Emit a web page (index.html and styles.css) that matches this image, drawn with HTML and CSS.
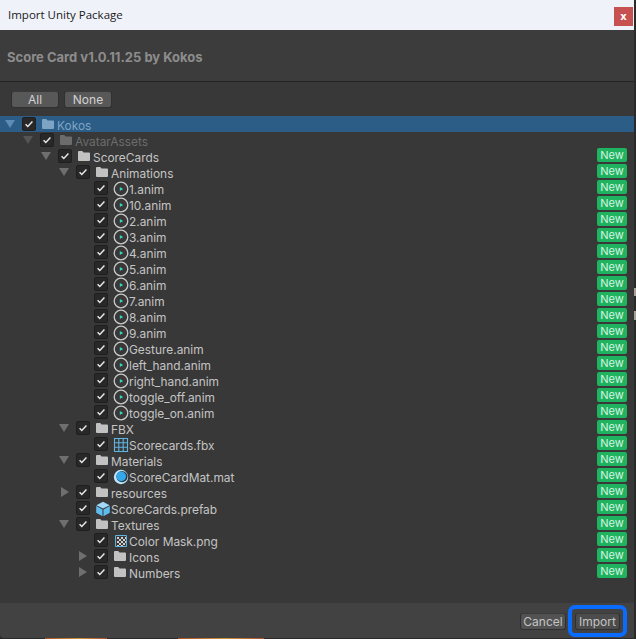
FILE: index.html
```html
<!DOCTYPE html>
<html lang="en">
<head>
<meta charset="utf-8">
<title>Import Unity Package</title>
<link rel="stylesheet" href="styles.css">
</head>
<body>
<svg class="defs" width="0" height="0" aria-hidden="true">
  <symbol id="folder" viewBox="0 0 14 12"><path d="M1 2q0-1 1-1h3.2l1.4 1.6H12q1 0 1 1V10q0 1-1 1H2q-1 0-1-1z" fill="currentColor"/></symbol>
  <symbol id="anim" viewBox="0 0 16 16"><circle cx="8" cy="8" r="6.8" fill="none" stroke="#c8c8c8" stroke-width="1.3"/><path d="M6.8 5.9L10.2 8l-3.4 2.1z" fill="#3fd0c0"/></symbol>
  <symbol id="fbx" viewBox="0 0 16 16"><path d="M1.5 1.5h13v13h-13zM5.8 1.5v13M10.2 1.5v13M1.5 5.8h13M1.5 10.2h13" fill="none" stroke="#5fb4e0" stroke-width="1.1"/></symbol>
  <symbol id="mat" viewBox="0 0 16 16"><circle cx="8" cy="8" r="7.2" fill="#bfe3f8"/><circle cx="9" cy="7.6" r="5.6" fill="#2b3a44"/><circle cx="8.2" cy="7.4" r="4.8" fill="#35a8ec"/></symbol>
  <symbol id="prefab" viewBox="0 0 16 16"><path d="M8 .8l6.6 3.4L8 7.6 1.4 4.2z" fill="#a3dafa"/><path d="M1.2 5L7.5 8.4V15.2L1.2 11.8z" fill="#5fbcef"/><path d="M14.8 5L8.5 8.4V15.2L14.8 11.8z" fill="#5fbcef"/></symbol>
  <symbol id="tex" viewBox="0 0 16 16"><path d="M2.5 2.5h11v11h-11z" fill="#3a3a3a" stroke="#5fb4e0"/><path d="M4 4h2v2H4zM8 4h2v2H8zM12 4h1v2h-1zM6 6h2v2H6zM10 6h2v2h-2zM4 8h2v2H4zM8 8h2v2H8zM12 8h1v2h-1zM6 10h2v2H6zM10 10h2v2h-2zM4 12h2v1H4zM8 12h2v1H8z" fill="#cfcfcf"/></symbol>
  <symbol id="tick" viewBox="0 0 14 14"><path d="M3 7.4l2.6 2.6L11 4.2" fill="none" stroke="#e8e8e8" stroke-width="1.7"/></symbol>
</svg>
<div class="backdrop">
<main class="window">
  <header class="titlebar">
    <span class="title-text">Import Unity Package</span>
    <button class="close" type="button">x</button>
  </header>
  <section class="package"><h1 class="package-name">Score Card v1.0.11.25 by Kokos</h1></section>
  <div class="toolbar">
    <button class="btn btn-wide" type="button">All</button>
    <button class="btn btn-wide" type="button">None</button>
  </div>
  <div class="tree">
    <div class="row selected"><span class="arrow down"></span><span class="check l0"><svg class="tick"><use href="#tick"/></svg></span><svg class="ico folder"><use href="#folder"/></svg><span class="name">Kokos</span></div>
    <div class="row dim lv1"><span class="arrow down"></span><span class="check"><svg class="tick"><use href="#tick"/></svg></span><svg class="ico folder"><use href="#folder"/></svg><span class="name">AvatarAssets</span></div>
    <div class="row lv2"><span class="arrow down"></span><span class="check"><svg class="tick"><use href="#tick"/></svg></span><svg class="ico folder"><use href="#folder"/></svg><span class="name">ScoreCards</span><span class="new">New</span></div>
    <div class="row lv3"><span class="arrow down"></span><span class="check"><svg class="tick"><use href="#tick"/></svg></span><svg class="ico folder"><use href="#folder"/></svg><span class="name">Animations</span><span class="new">New</span></div>
    <div class="row lv4"><span class="arrow"></span><span class="check"><svg class="tick"><use href="#tick"/></svg></span><svg class="ico file"><use href="#anim"/></svg><span class="name">1.anim</span><span class="new">New</span></div>
    <div class="row lv4"><span class="arrow"></span><span class="check"><svg class="tick"><use href="#tick"/></svg></span><svg class="ico file"><use href="#anim"/></svg><span class="name">10.anim</span><span class="new">New</span></div>
    <div class="row lv4"><span class="arrow"></span><span class="check"><svg class="tick"><use href="#tick"/></svg></span><svg class="ico file"><use href="#anim"/></svg><span class="name">2.anim</span><span class="new">New</span></div>
    <div class="row lv4"><span class="arrow"></span><span class="check"><svg class="tick"><use href="#tick"/></svg></span><svg class="ico file"><use href="#anim"/></svg><span class="name">3.anim</span><span class="new">New</span></div>
    <div class="row lv4"><span class="arrow"></span><span class="check"><svg class="tick"><use href="#tick"/></svg></span><svg class="ico file"><use href="#anim"/></svg><span class="name">4.anim</span><span class="new">New</span></div>
    <div class="row lv4"><span class="arrow"></span><span class="check"><svg class="tick"><use href="#tick"/></svg></span><svg class="ico file"><use href="#anim"/></svg><span class="name">5.anim</span><span class="new">New</span></div>
    <div class="row lv4"><span class="arrow"></span><span class="check"><svg class="tick"><use href="#tick"/></svg></span><svg class="ico file"><use href="#anim"/></svg><span class="name">6.anim</span><span class="new">New</span></div>
    <div class="row lv4"><span class="arrow"></span><span class="check"><svg class="tick"><use href="#tick"/></svg></span><svg class="ico file"><use href="#anim"/></svg><span class="name">7.anim</span><span class="new">New</span></div>
    <div class="row lv4"><span class="arrow"></span><span class="check"><svg class="tick"><use href="#tick"/></svg></span><svg class="ico file"><use href="#anim"/></svg><span class="name">8.anim</span><span class="new">New</span></div>
    <div class="row lv4"><span class="arrow"></span><span class="check"><svg class="tick"><use href="#tick"/></svg></span><svg class="ico file"><use href="#anim"/></svg><span class="name">9.anim</span><span class="new">New</span></div>
    <div class="row lv4"><span class="arrow"></span><span class="check"><svg class="tick"><use href="#tick"/></svg></span><svg class="ico file"><use href="#anim"/></svg><span class="name">Gesture.anim</span><span class="new">New</span></div>
    <div class="row lv4"><span class="arrow"></span><span class="check"><svg class="tick"><use href="#tick"/></svg></span><svg class="ico file"><use href="#anim"/></svg><span class="name">left_hand.anim</span><span class="new">New</span></div>
    <div class="row lv4"><span class="arrow"></span><span class="check"><svg class="tick"><use href="#tick"/></svg></span><svg class="ico file"><use href="#anim"/></svg><span class="name">right_hand.anim</span><span class="new">New</span></div>
    <div class="row lv4"><span class="arrow"></span><span class="check"><svg class="tick"><use href="#tick"/></svg></span><svg class="ico file"><use href="#anim"/></svg><span class="name">toggle_off.anim</span><span class="new">New</span></div>
    <div class="row lv4"><span class="arrow"></span><span class="check"><svg class="tick"><use href="#tick"/></svg></span><svg class="ico file"><use href="#anim"/></svg><span class="name">toggle_on.anim</span><span class="new">New</span></div>
    <div class="row lv3"><span class="arrow down"></span><span class="check"><svg class="tick"><use href="#tick"/></svg></span><svg class="ico folder"><use href="#folder"/></svg><span class="name">FBX</span><span class="new">New</span></div>
    <div class="row lv4"><span class="arrow"></span><span class="check"><svg class="tick"><use href="#tick"/></svg></span><svg class="ico file"><use href="#fbx"/></svg><span class="name">Scorecards.fbx</span><span class="new">New</span></div>
    <div class="row lv3"><span class="arrow down"></span><span class="check"><svg class="tick"><use href="#tick"/></svg></span><svg class="ico folder"><use href="#folder"/></svg><span class="name">Materials</span><span class="new">New</span></div>
    <div class="row lv4"><span class="arrow"></span><span class="check"><svg class="tick"><use href="#tick"/></svg></span><svg class="ico file"><use href="#mat"/></svg><span class="name">ScoreCardMat.mat</span><span class="new">New</span></div>
    <div class="row lv3"><span class="arrow right"></span><span class="check"><svg class="tick"><use href="#tick"/></svg></span><svg class="ico folder"><use href="#folder"/></svg><span class="name">resources</span><span class="new">New</span></div>
    <div class="row lv3"><span class="arrow"></span><span class="check"><svg class="tick"><use href="#tick"/></svg></span><svg class="ico file"><use href="#prefab"/></svg><span class="name">ScoreCards.prefab</span><span class="new">New</span></div>
    <div class="row lv3"><span class="arrow down"></span><span class="check"><svg class="tick"><use href="#tick"/></svg></span><svg class="ico folder"><use href="#folder"/></svg><span class="name">Textures</span><span class="new">New</span></div>
    <div class="row lv4"><span class="arrow"></span><span class="check"><svg class="tick"><use href="#tick"/></svg></span><svg class="ico file"><use href="#tex"/></svg><span class="name">Color Mask.png</span><span class="new">New</span></div>
    <div class="row lv4"><span class="arrow right"></span><span class="check"><svg class="tick"><use href="#tick"/></svg></span><svg class="ico folder"><use href="#folder"/></svg><span class="name">Icons</span><span class="new">New</span></div>
    <div class="row lv4"><span class="arrow right"></span><span class="check"><svg class="tick"><use href="#tick"/></svg></span><svg class="ico folder"><use href="#folder"/></svg><span class="name">Numbers</span><span class="new">New</span></div>
  </div>
  <footer class="footer">
    <button class="btn btn-cancel" type="button">Cancel</button>
    <button class="btn btn-import" type="button">Import</button>
  </footer>
</main>
<div class="peek">
  <span class="peek-a"></span>
  <span class="peek-b"></span>
</div>
<span class="edge edge-a"></span>
<span class="edge edge-b"></span>
</div>
</body>
</html>
```
FILE: styles.css
```css
* { box-sizing: border-box; }
html, body { margin: 0; padding: 0; }
body {
  width: 636px;
  height: 639px;
  overflow: hidden;
  background: #2a2a2a;
  font-family: Inter, "Liberation Sans", sans-serif;
  font-size: 12px;
  color: #c4c4c4;
}
.defs { position: absolute; }
.backdrop { display: flex; flex-direction: column; position: relative; }
.window {
  width: 634px;
  height: 638px;
  display: flex;
  flex-direction: column;
  background: #383838;
  border-bottom-left-radius: 4px;
  overflow: hidden;
}
.titlebar {
  height: 30px;
  flex: none;
  display: flex;
  align-items: center;
  justify-content: space-between;
  background: #f0f2f9;
  padding: 0 1px 0 8px;
  color: #1a1a1a;
  font-family: "Open Sans", "Liberation Sans", sans-serif;
  font-size: 11.5px;
}
.title-text { margin-top: -2px; }
.close {
  width: 19px;
  height: 19px;
  margin-top: 3px;
  padding: 0;
  border: 0;
  background: #c75050;
  color: #fff;
  font: bold 10px "DejaVu Sans", sans-serif;
}
.package {
  height: 52px;
  flex: none;
  display: flex;
  align-items: center;
  padding: 2px 7px 0;
  background: #3c3c3c;
  border-bottom: 1px solid #232323;
}
.package-name {
  margin: 0;
  font-size: 13px;
  font-weight: 700;
  color: #8d8d8d;
}
.toolbar {
  height: 34px;
  flex: none;
  display: flex;
  gap: 5px;
  padding: 9px 0 0 11px;
}
.btn {
  height: 17px;
  padding: 0;
  border: 1px solid #303030;
  border-top-color: #3a3a3a;
  border-radius: 3px;
  background: #585858;
  color: #d2d2d2;
  font-family: Inter, "Liberation Sans", sans-serif;
  font-size: 12px;
  line-height: 15px;
}
.btn-wide { width: 48px; }
.tree { flex: 1; min-height: 0; }
.row {
  height: 16px;
  display: flex;
  align-items: center;
  padding-left: 4px;
  line-height: 16px;
}
.lv1 { padding-left: 22px; }
.lv2 { padding-left: 40px; }
.lv3 { padding-left: 58px; }
.lv4 { padding-left: 76px; }
.selected { background: #2c5d87; color: #7da4c4; }
.dim { color: #6c6c6c; }
.arrow { width: 14px; height: 16px; margin-right: 4px; flex: none; position: relative; }
.arrow.down::before {
  content: "";
  position: absolute;
  left: 1px;
  top: 4px;
  border-style: solid;
  border-width: 8px 5px 0;
  border-color: #6f6f6f transparent transparent;
}
.arrow.right::before {
  content: "";
  position: absolute;
  left: 3px;
  top: 3px;
  border-style: solid;
  border-width: 5px 0 5px 8px;
  border-color: transparent transparent transparent #6f6f6f;
}
.selected .arrow.down::before { border-top-color: #5d8db5; }
.dim .arrow.down::before { border-top-color: #555; }
.check {
  width: 14px;
  height: 14px;
  flex: none;
  display: flex;
  margin-right: 5px;
  background: #282828;
  border: 1px solid #1f1f1f;
  border-radius: 2px;
}
.tick { width: 12px; height: 12px; }
.ico { flex: none; }
.folder { width: 14px; height: 12px; margin-right: 2px; color: #c2c2c2; }
.selected .folder { color: #7da4c4; }
.dim .folder { color: #6c6c6c; }
.file { width: 16px; height: 16px; margin-top: 2px; }
.name { white-space: nowrap; padding-top: 4px; height: 20px; font-size: 11.9px; }
.new {
  margin-left: auto;
  margin-right: 7px;
  width: 30px;
  height: 14px;
  margin-top: -2px;
  flex: none;
  border-radius: 2px;
  background: #1fb35f;
  color: #d6f3e2;
  font-size: 11px;
  line-height: 14px;
  text-align: center;
}
.footer {
  height: 35px;
  flex: none;
  display: flex;
  justify-content: flex-end;
  gap: 9px;
  padding: 10px 14px 0 0;
  background: #424242;
}
.btn-cancel { width: 46px; background: #525252; color: #c4c4c4; }
.btn-import { width: 45px; position: relative; background: #4c4c4c; color: #c4c4c4; }
.btn-import::after {
  content: "";
  position: absolute;
  left: -8px;
  right: -8px;
  top: -9px;
  bottom: -8px;
  border: 4px solid #0a6cff;
  border-radius: 7px;
}
.peek { height: 1px; display: flex; }
.peek-a { width: 62px; margin-left: 45px; background: linear-gradient(90deg, #a8522c, #c8963c 55%, #a8522c); }
.peek-b { width: 86px; margin-left: 71px; background: linear-gradient(90deg, #a8522c, #c8963c 55%, #a8522c); }
.edge { position: absolute; left: 634px; width: 2px; background: #a59f98; }
.edge-a { top: 288px; height: 8px; }
.edge-b { top: 311px; height: 9px; }
```
